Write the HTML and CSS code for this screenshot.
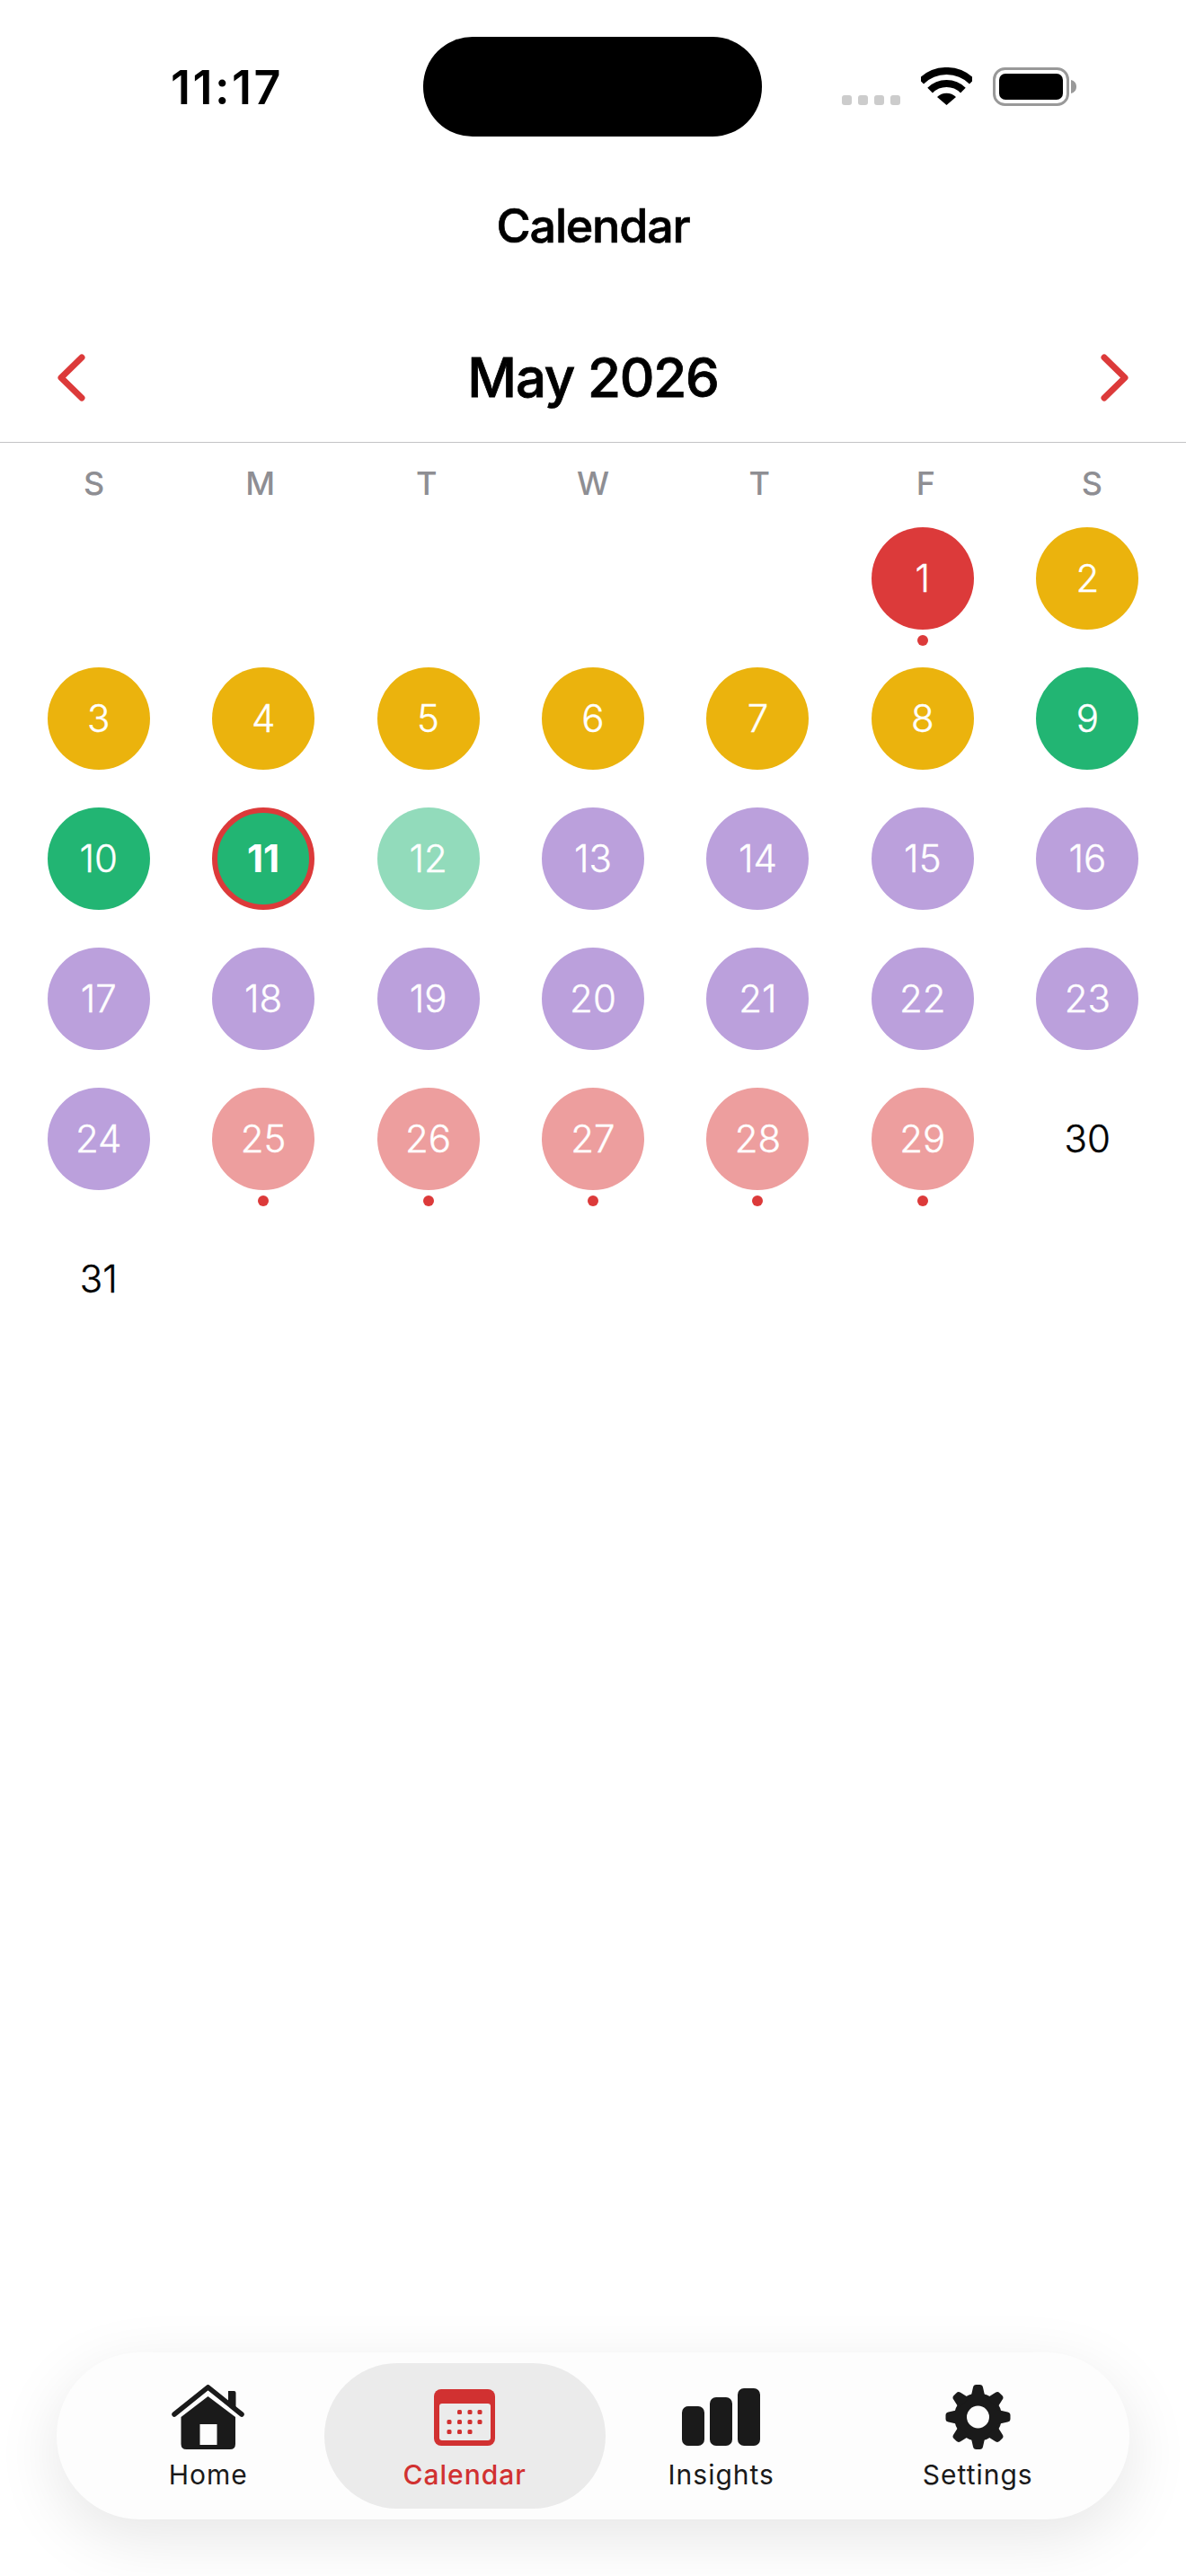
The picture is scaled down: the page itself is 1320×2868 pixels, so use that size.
FILE: index.html
```html
<!DOCTYPE html>
<html lang="en">
<head>
  <meta charset="UTF-8" />
  <meta name="viewport" content="width=device-width, initial-scale=1.0"/>
  <title>Calendar</title>
  <link rel="stylesheet" href="styles.css">
</head>
<body>
  <div class="statusbar">
    <div class="time">11:17</div>
    <div class="island"></div>
    <div class="status-icons">
      <div class="signal"><span></span><span></span><span></span><span></span></div>
      <svg class="wifi" width="57" height="42" viewBox="0 0 57 42">
        <path d="M.2 15.7A40 40 0 0 1 56.8 15.7" fill="none" stroke="#000" stroke-width="8"/>
        <path d="M10.1 25.6A26 26 0 0 1 46.9 25.6" fill="none" stroke="#000" stroke-width="8"/>
        <path d="M18 33A15 15 0 0 1 39 33L28.5 42Z" fill="#000"/>
      </svg>
      <svg class="battery" width="93" height="43" viewBox="0 0 93 43">
        <rect x="1.5" y="1.5" width="82" height="40" rx="12" fill="none" stroke="#999" stroke-width="3"/>
        <rect x="7" y="7" width="71" height="29" rx="7" fill="#000"/>
        <path d="M87 14C91 15 93 18 93 21.5S91 28 87 29Z" fill="#999"/>
      </svg>
    </div>
  </div>

  <h1 class="title">Calendar</h1>

  <div class="month-bar">
    <svg width="31" height="53" viewBox="0 0 31 53">
      <path d="M27 4L4 26.5 27 49" fill="none" stroke="#dc3a3a" stroke-width="7" stroke-linecap="round" stroke-linejoin="round"/>
    </svg>
    <div class="month-name">May 2026</div>
    <svg width="31" height="53" viewBox="0 0 31 53">
      <path d="M4 4L27 26.5 4 49" fill="none" stroke="#dc3a3a" stroke-width="7" stroke-linecap="round" stroke-linejoin="round"/>
    </svg>
  </div>

  <div class="weekdays">
    <div>S</div><div>M</div><div>T</div><div>W</div><div>T</div><div>F</div><div>S</div>
  </div>

  <div class="days">
    <div class="day"></div>
    <div class="day"></div>
    <div class="day"></div>
    <div class="day"></div>
    <div class="day"></div>
    <div class="day"><div class="num red">1</div><div class="dot"></div></div>
    <div class="day"><div class="num yellow">2</div></div>

    <div class="day"><div class="num yellow">3</div></div>
    <div class="day"><div class="num yellow">4</div></div>
    <div class="day"><div class="num yellow">5</div></div>
    <div class="day"><div class="num yellow">6</div></div>
    <div class="day"><div class="num yellow">7</div></div>
    <div class="day"><div class="num yellow">8</div></div>
    <div class="day"><div class="num green">9</div></div>

    <div class="day"><div class="num green">10</div></div>
    <div class="day"><div class="num green today">11</div></div>
    <div class="day"><div class="num mint">12</div></div>
    <div class="day"><div class="num purple">13</div></div>
    <div class="day"><div class="num purple">14</div></div>
    <div class="day"><div class="num purple">15</div></div>
    <div class="day"><div class="num purple">16</div></div>

    <div class="day"><div class="num purple">17</div></div>
    <div class="day"><div class="num purple">18</div></div>
    <div class="day"><div class="num purple">19</div></div>
    <div class="day"><div class="num purple">20</div></div>
    <div class="day"><div class="num purple">21</div></div>
    <div class="day"><div class="num purple">22</div></div>
    <div class="day"><div class="num purple">23</div></div>

    <div class="day"><div class="num purple">24</div></div>
    <div class="day"><div class="num pink">25</div><div class="dot"></div></div>
    <div class="day"><div class="num pink">26</div><div class="dot"></div></div>
    <div class="day"><div class="num pink">27</div><div class="dot"></div></div>
    <div class="day"><div class="num pink">28</div><div class="dot"></div></div>
    <div class="day"><div class="num pink">29</div><div class="dot"></div></div>
    <div class="day"><div class="num">30</div></div>

    <div class="day"><div class="num">31</div></div>
  </div>

  <nav class="tabbar">
    <div class="tab">
      <div class="tab-icon">
        <svg width="81" height="72" viewBox="0 0 81 72">
          <path d="M63 7H69.500Q71.500 7 71.500 9V26L63 18Z" fill="#1a1a1a"/>
          <path d="M3 33L40.500 2.800 78 33" fill="none" stroke="#1a1a1a" stroke-width="5.500" stroke-linecap="round" stroke-linejoin="round"/>
          <path d="M40.500 13L71 36V66Q71 72 65 72H16.500Q10.500 72 10.500 66V36Z" fill="#1a1a1a"/>
          <rect x="31.500" y="44" width="19" height="23" fill="#fdfdfd"/>
        </svg>
      </div>
      <div class="tab-label">Home</div>
    </div>
    <div class="tab active">
      <div class="tab-icon">
        <svg width="68" height="63" viewBox="0 0 68 63">
          <rect width="68" height="63" rx="8" fill="#d13131"/>
          <rect x="6" y="16" width="57" height="41" rx="3" fill="#ebebeb"/>
          <g fill="#d13131">
            <rect x="26" y="23" width="5" height="5" rx="1.500"/>
            <rect x="37.500" y="23" width="5" height="5" rx="1.500"/>
            <rect x="48.500" y="23" width="5" height="5" rx="1.500"/>
            <rect x="14.500" y="34" width="5" height="5" rx="1.500"/>
            <rect x="26" y="34" width="5" height="5" rx="1.500"/>
            <rect x="37.500" y="34" width="5" height="5" rx="1.500"/>
            <rect x="48.500" y="34" width="5" height="5" rx="1.500"/>
            <rect x="14.500" y="45" width="5" height="5" rx="1.500"/>
            <rect x="26" y="45" width="5" height="5" rx="1.500"/>
            <rect x="37.500" y="45" width="5" height="5" rx="1.500"/>
          </g>
        </svg>
      </div>
      <div class="tab-label">Calendar</div>
    </div>
    <div class="tab">
      <div class="tab-icon">
        <svg width="87" height="64" viewBox="0 0 87 64">
          <rect x="0" y="20" width="25" height="44" rx="7" fill="#1a1a1a"/>
          <rect x="31" y="10" width="25" height="54" rx="7" fill="#1a1a1a"/>
          <rect x="62" y="0" width="25" height="64" rx="7" fill="#1a1a1a"/>
        </svg>
      </div>
      <div class="tab-label">Insights</div>
    </div>
    <div class="tab">
      <div class="tab-icon">
        <svg width="73" height="72" viewBox="0 0 72 72">
          <circle cx="36" cy="36" r="19.500" fill="none" stroke="#1a1a1a" stroke-width="14"/>
          <g fill="#1a1a1a">
            <path d="M28 14L30.500 3Q31 0 34 0H38Q41 0 41.500 3L44 14Z"/>
            <path transform="rotate(45 36 36)" d="M28 14L30.500 3Q31 0 34 0H38Q41 0 41.500 3L44 14Z"/>
            <path transform="rotate(90 36 36)" d="M28 14L30.500 3Q31 0 34 0H38Q41 0 41.500 3L44 14Z"/>
            <path transform="rotate(135 36 36)" d="M28 14L30.500 3Q31 0 34 0H38Q41 0 41.500 3L44 14Z"/>
            <path transform="rotate(180 36 36)" d="M28 14L30.500 3Q31 0 34 0H38Q41 0 41.500 3L44 14Z"/>
            <path transform="rotate(225 36 36)" d="M28 14L30.500 3Q31 0 34 0H38Q41 0 41.500 3L44 14Z"/>
            <path transform="rotate(270 36 36)" d="M28 14L30.500 3Q31 0 34 0H38Q41 0 41.500 3L44 14Z"/>
            <path transform="rotate(315 36 36)" d="M28 14L30.500 3Q31 0 34 0H38Q41 0 41.500 3L44 14Z"/>
          </g>
        </svg>
      </div>
      <div class="tab-label">Settings</div>
    </div>
  </nav>
</body>
</html>
```

FILE: styles.css
```css
html, body {
  margin: 0;
  padding: 0;
}
body {
  width: 1320px;
  height: 2868px;
  background: #fff;
  color: #000;
  font-family: Inter, "Liberation Sans", sans-serif;
  display: flex;
  flex-direction: column;
  overflow: hidden;
}

/* status bar */
.statusbar {
  display: flex;
  height: 111px;
  padding-top: 41px;
}
.time {
  width: 471px;
  box-sizing: border-box;
  padding-left: 190px;
  font-size: 52px;
  font-weight: 600;
  line-height: 114px;
  letter-spacing: 2.5px;
}
.island {
  width: 377px;
  height: 111px;
  background: #000;
  border-radius: 55px;
}
.status-icons {
  display: flex;
  align-items: flex-start;
  margin-left: 89px;
  padding-top: 34px;
}
.signal {
  display: flex;
  gap: 7px;
  margin-top: 31px;
}
.signal span {
  width: 11px;
  height: 11px;
  border-radius: 3px;
  background: #ccc;
}
.wifi {
  margin-left: 23px;
}
.battery {
  margin-left: 23px;
}

/* headings */
.title {
  margin: 64px 0 0 0;
  height: 72px;
  font-size: 52px;
  font-weight: 500;
  line-height: 72px;
  text-align: center;
  letter-spacing: -1.2px;
  -webkit-text-stroke: 0.7px #000;
}
.month-bar {
  display: flex;
  align-items: center;
  justify-content: space-between;
  box-sizing: border-box;
  height: 205px;
  padding: 60px 64px 0 64px;
  border-bottom: 1px solid #c4c4c6;
}
.month-name {
  font-size: 60px;
  font-weight: 500;
  letter-spacing: -1.2px;
  -webkit-text-stroke: 0.8px #000;
}

/* calendar */
.weekdays {
  display: grid;
  grid-template-columns: repeat(7, 1fr);
  padding: 0 12px;
  height: 94px;
  font-size: 36px;
  font-weight: 500;
  line-height: 90px;
  text-align: center;
  color: #8e8e93;
}
.days {
  display: grid;
  grid-template-columns: repeat(7, 1fr);
  grid-auto-rows: 156px;
  padding: 0 18px;
}
.day {
  display: flex;
  flex-direction: column;
  align-items: center;
}
.num {
  width: 114px;
  height: 114px;
  box-sizing: border-box;
  border-radius: 50%;
  font-size: 42px;
  font-weight: 300;
  line-height: 114px;
  text-align: center;
  color: #000;
  -webkit-text-stroke: 0.4px currentColor;
}
.dot {
  width: 12px;
  height: 12px;
  margin-top: 6px;
  border-radius: 50%;
  background: #dc3a3a;
}
.red { background: #dc3a3a; color: #fff; }
.yellow { background: #ebb30d; color: #fff; }
.green { background: #22b573; color: #fff; }
.mint { background: #92dbbb; color: #fff; }
.purple { background: #bba0dc; color: #fff; }
.pink { background: #ed9e9e; color: #fff; }
.today {
  border: 6px solid #dc3a3a;
  font-weight: 700;
  line-height: 102px;
  -webkit-text-stroke: 0;
}

/* bottom tabs */
.tabbar {
  display: flex;
  margin: auto 63px 63px 63px;
  padding: 0 26px;
  height: 186px;
  border-radius: 93px;
  background: #fdfdfd;
  box-shadow: 0 20px 70px rgba(0,0,0,0.1);
}
.tab {
  flex: 1;
  position: relative;
  display: flex;
  flex-direction: column;
  align-items: center;
}
.tab.active::before {
  content: "";
  position: absolute;
  top: 12px;
  bottom: 12px;
  left: -14px;
  right: -14px;
  border-radius: 81px;
  background: #ebebeb;
}
.tab-icon {
  position: relative;
  height: 72px;
  margin-top: 36px;
  display: flex;
  align-items: center;
  justify-content: center;
}
.tab-label {
  position: relative;
  margin-top: 8px;
  font-size: 30px;
  font-weight: 400;
  line-height: 40px;
  letter-spacing: 1px;
  color: #1a1a1a;
}
.active .tab-label {
  color: #d13131;
  font-weight: 500;
}
```
